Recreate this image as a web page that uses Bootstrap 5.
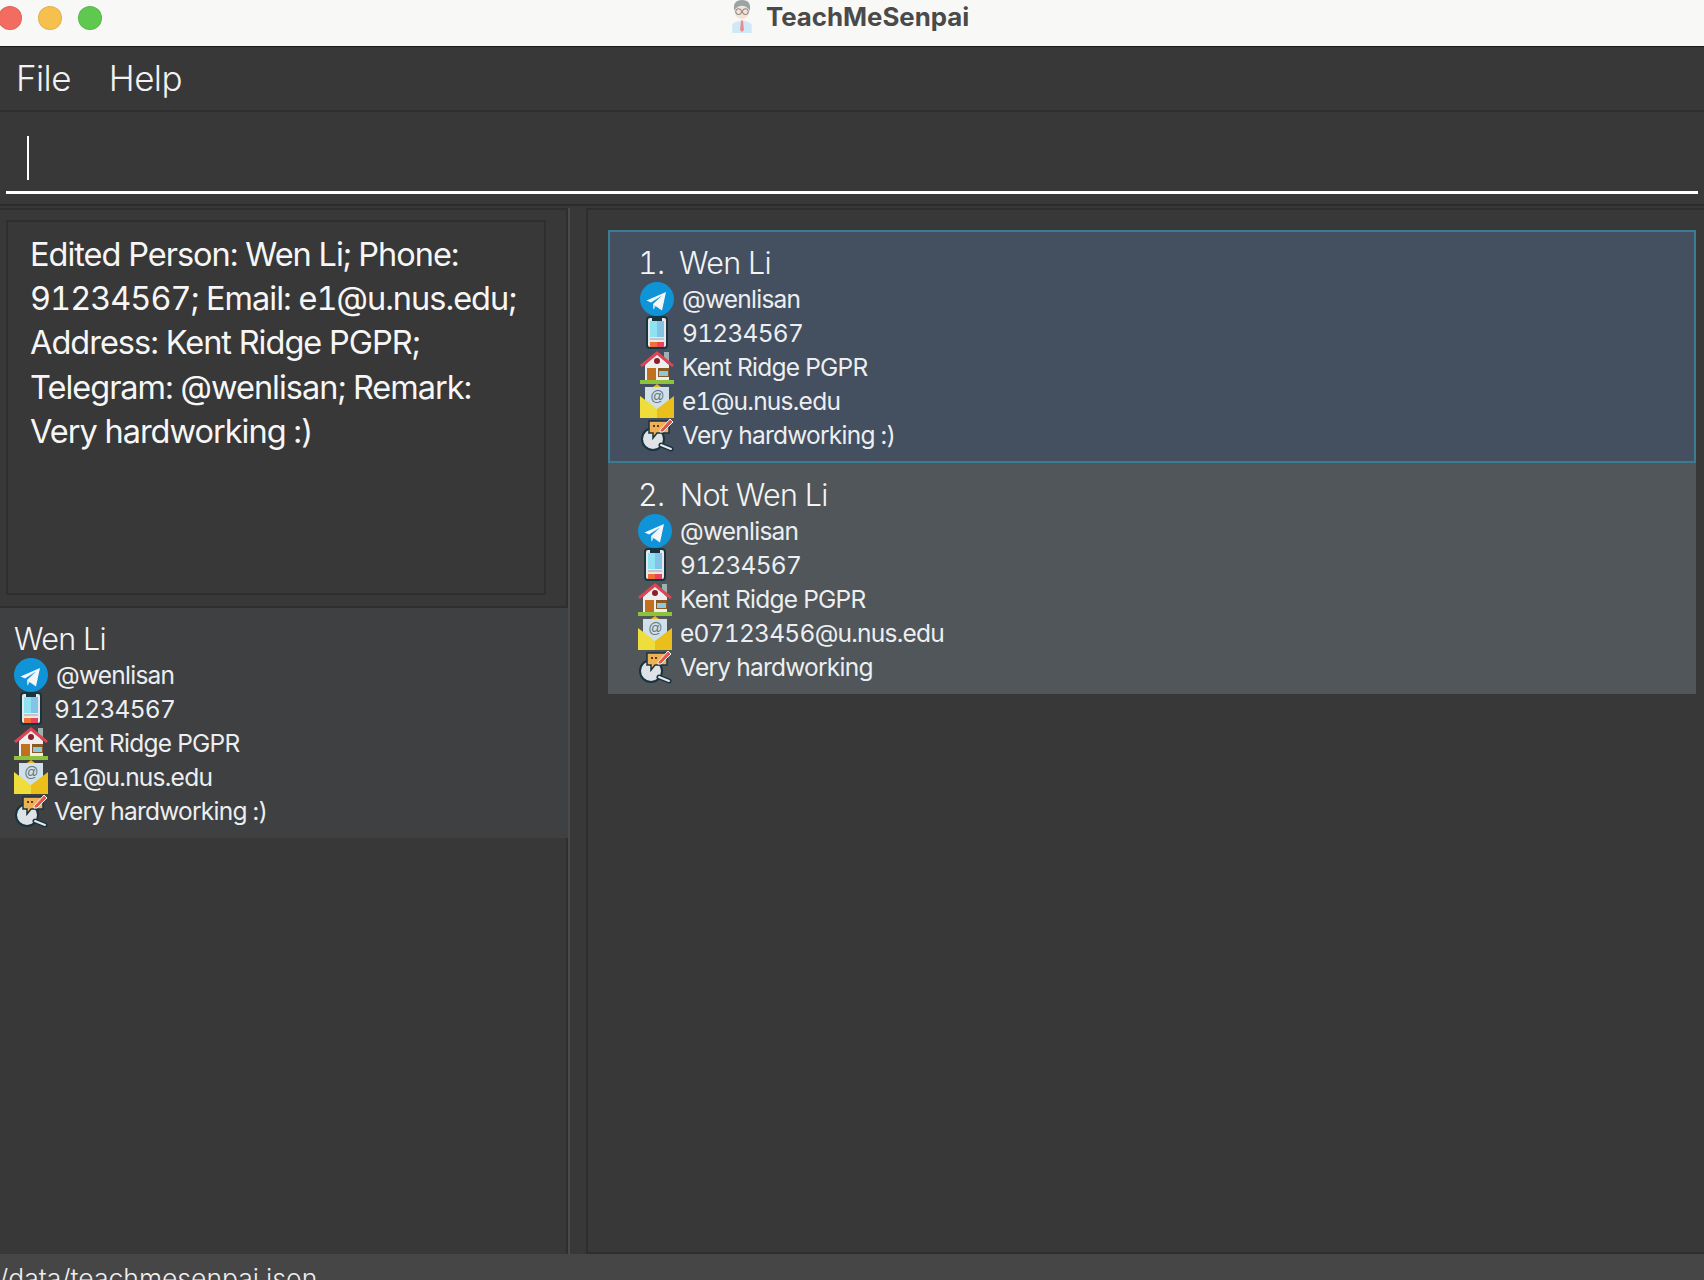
<!doctype html>
<html lang="en">
<head>
<meta charset="utf-8">
<title>TeachMeSenpai</title>
<link href="https://cdn.jsdelivr.net/npm/bootstrap@5.3.0/dist/css/bootstrap.min.css" rel="stylesheet">
<style>
html,body{height:1280px;overflow:hidden;background:#383838}
body{font-family:Inter,"Liberation Sans",sans-serif;color:#f0f0f0;display:flex;flex-direction:column;font-feature-settings:"tnum"}
.tbar{height:47px;flex:none;background:#f8f8f6;border-bottom:1px solid #1c1c1c;position:relative}
.lights{gap:16px;margin-left:-2px;padding-top:6px}
.lt{width:24px;height:24px;border-radius:50%;border:1px solid rgba(0,0,0,.08)}
.tname{position:absolute;left:730px;top:0;height:34px;gap:12px;font-size:25.8px;font-weight:700;color:#4a4a4a;white-space:nowrap;line-height:34px}
.mbar{height:65px;flex:none;border-bottom:2px solid #2e2e2e;padding-left:16px;gap:38px;font-size:35px;font-weight:300;color:#f2f2f2;letter-spacing:-.6px;line-height:62px}
.cmd{height:94px;flex:none;padding:0 6px;border-bottom:2px solid #2c2c2c}
.cmdin{height:82px;border-bottom:3px solid #fff;padding:24px 0 0 21px}
.caret{width:2px;height:44px;background:#fff}
.split{flex:1 1 0;min-height:0;padding-top:2px}
.lpane{width:568px;flex:none;border-top:2px solid #2e2e2e;border-right:2px solid #2e2e2e}
.dvd{width:2px;background:#4a4a4a;flex:none}
.gap{width:16px;flex:none}
.rpane{flex:1 1 0;min-width:0;border:2px solid #2e2e2e;border-right:0;padding:20px 8px 0 20px}
.rwrap{height:398px;padding:10px 20px 11px 6px;border-bottom:2px solid #2e2e2e}
.rbox{height:100%;border:2px solid #2e2e2e;padding:11px 10px 0 22px;font-size:32.5px;font-weight:400;line-height:44.2px;letter-spacing:-1px;color:#f6f6f6}
.ppl{background:#3f4042;padding:12px 0 9px 14px;height:230px;margin-right:-2px}
.pcard{padding:13px 0 0 30px;height:231px}
.pcard.pick{background:#444f60;border:2px solid #3c7c92;padding:12px 0 0 30px;height:233px}
.pick .nm{margin-left:-2px}
.pcard.plain{background:#50565a}
.nm{font-size:30.5px;font-weight:350;line-height:38px;letter-spacing:-.7px;color:#f4f4f4}
.num{display:inline-block;width:41px}
.plain .num{width:42px}
.rw{height:34px;gap:8px;font-size:24.5px;letter-spacing:-.75px;color:#eceef0;line-height:34px}
.ppl .rw{gap:6px}
.ic{width:34px;height:34px;flex:none}
.stat{height:26px;flex:none;background:#464646;font-size:26.5px;font-weight:300;line-height:31px;color:#eee;overflow:hidden;white-space:nowrap;padding-top:9px}
.stat span{display:block;margin-left:-1px}
</style>
</head>
<body>
<svg width="0" height="0" class="position-absolute">
<defs>
<symbol id="i-tg" viewBox="0 0 34 34"><circle cx="17" cy="17" r="17" fill="#0f94d8"/><path d="M6.5 18.5 26 10 22 28.5 15.5 24 13.5 27.5 13 22 22 13.5 11 20.5Z" fill="#f4f6f8"/><path d="M13 22 15.5 24 13.5 27.5Z" fill="#c9d6e2"/></symbol>
<symbol id="i-ph" viewBox="0 0 34 34"><rect x="6" y="0" width="22" height="33" rx="4" fill="#17343f"/><rect x="8" y="2" width="18" height="29" rx="2" fill="#e8e8ea"/><rect x="10" y="5" width="7" height="16" fill="#8fe3f0"/><rect x="17" y="5" width="7" height="16" fill="#83c3e6"/><rect x="12" y="0" width="10" height="5" fill="#17343f"/><rect x="10" y="22" width="14" height="2" fill="#c4c4ca"/><rect x="10" y="26" width="7" height="5" fill="#ef6f37"/><rect x="17" y="26" width="7" height="5" fill="#e9445a"/></symbol>
<symbol id="i-ho" viewBox="0 0 34 34"><rect x="24" y="2" width="5" height="10" fill="#9fb0b5"/><path d="M5 15 17 4 29 15V30H5Z" fill="#eeeeee"/><path d="M0 15 17 1 34 15 32 17 17 5 2 17Z" fill="#de4454"/><circle cx="17" cy="11" r="3" fill="#8c1f2c"/><rect x="7" y="18" width="9" height="13" fill="#c0701f"/><rect x="18" y="18" width="11" height="9" fill="#8a5a25"/><rect x="19" y="21" width="9" height="5" fill="#8dc8de"/><rect x="0" y="30" width="34" height="4" fill="#8dc33c"/></symbol>
<symbol id="i-ma" viewBox="0 0 34 34"><path d="M17 0 21 3H13Z" fill="#eab71e"/><rect x="5" y="3" width="24" height="24" fill="#cfe0e8"/><text x="17" y="17" text-anchor="middle" font-family="Liberation Sans" font-size="14" fill="#66717a">@</text><path d="M0 12 17 25V34H0Z" fill="#eedd3a"/><path d="M34 12 17 25V34H34Z" fill="#eabf1c"/></symbol>
<symbol id="i-re" viewBox="0 0 34 34"><circle cx="13" cy="21" r="11" fill="#dfe3e7" stroke="#17343f" stroke-width="2"/><path d="M21 27 31 31" stroke="#17343f" stroke-width="5" stroke-linecap="round"/><path d="M21 27 31 31" stroke="#e8e8ea" stroke-width="2" stroke-linecap="round"/><path d="M9 3H29V15H17L13 20V15H9Z" fill="#efb154" stroke="#17343f" stroke-width="1.5"/><rect x="13" y="7" width="2" height="2" fill="#5c3c16"/><rect x="17" y="7" width="2" height="2" fill="#5c3c16"/><path d="M20 12 30 1 33 4 23 14H20Z" fill="#e2584e" stroke="#f4f4f4" stroke-width="1"/></symbol>
<symbol id="i-av" viewBox="0 0 24 34"><path d="M2 34V26Q3 22 12 21 21 22 22 26V34Z" fill="#cfe9f6"/><path d="M11 21H13L14 31 12 33 10 31Z" fill="#ec8a8e"/><circle cx="12" cy="12" r="7.5" fill="#f5e2d6"/><path d="M4 11Q2 0 12 0 22 0 20 11 17 6 12 6 7 6 4 11Z" fill="#9aa3a6"/><circle cx="8.5" cy="12" r="3" fill="none" stroke="#777" stroke-width="1"/><circle cx="15.5" cy="12" r="3" fill="none" stroke="#777" stroke-width="1"/></symbol>
</defs>
</svg>
<div class="tbar">
  <div class="lights d-flex">
    <div class="lt" style="background:#f26c60"></div><div class="lt" style="background:#f6c04f"></div><div class="lt" style="background:#5fc94f"></div>
  </div>
  <div class="tname d-flex"><svg width="24" height="33"><use href="#i-av"/></svg><span>TeachMeSenpai</span></div>
</div>
<div class="mbar d-flex"><span>File</span><span>Help</span></div>
<div class="cmd"><div class="cmdin"><div class="caret"></div></div></div>
<div class="split d-flex">
  <div class="lpane">
    <div class="rwrap"><div class="rbox">Edited Person: Wen Li; Phone: 91234567; Email: e1@u.nus.edu; Address: Kent Ridge PGPR; Telegram: @wenlisan; Remark: Very hardworking :)</div></div>
    <div class="ppl">
      <div class="nm">Wen Li</div>
      <div class="rw d-flex"><svg class="ic"><use href="#i-tg"/></svg><span style="margin-left:2px">@wenlisan</span></div>
      <div class="rw d-flex"><svg class="ic"><use href="#i-ph"/></svg><span>91234567</span></div>
      <div class="rw d-flex"><svg class="ic"><use href="#i-ho"/></svg><span>Kent Ridge PGPR</span></div>
      <div class="rw d-flex"><svg class="ic"><use href="#i-ma"/></svg><span>e1@u.nus.edu</span></div>
      <div class="rw d-flex"><svg class="ic"><use href="#i-re"/></svg><span>Very hardworking :)</span></div>
    </div>
  </div>
  <div class="dvd"></div>
  <div class="gap"></div>
  <div class="rpane">
    <div class="pcard pick">
      <div class="nm"><span class="num">1.</span>Wen Li</div>
      <div class="rw d-flex"><svg class="ic"><use href="#i-tg"/></svg><span>@wenlisan</span></div>
      <div class="rw d-flex"><svg class="ic"><use href="#i-ph"/></svg><span>91234567</span></div>
      <div class="rw d-flex"><svg class="ic"><use href="#i-ho"/></svg><span>Kent Ridge PGPR</span></div>
      <div class="rw d-flex"><svg class="ic"><use href="#i-ma"/></svg><span>e1@u.nus.edu</span></div>
      <div class="rw d-flex"><svg class="ic"><use href="#i-re"/></svg><span>Very hardworking :)</span></div>
    </div>
    <div class="pcard plain">
      <div class="nm"><span class="num">2.</span>Not Wen Li</div>
      <div class="rw d-flex"><svg class="ic"><use href="#i-tg"/></svg><span>@wenlisan</span></div>
      <div class="rw d-flex"><svg class="ic"><use href="#i-ph"/></svg><span>91234567</span></div>
      <div class="rw d-flex"><svg class="ic"><use href="#i-ho"/></svg><span>Kent Ridge PGPR</span></div>
      <div class="rw d-flex"><svg class="ic"><use href="#i-ma"/></svg><span>e07123456@u.nus.edu</span></div>
      <div class="rw d-flex"><svg class="ic"><use href="#i-re"/></svg><span>Very hardworking</span></div>
    </div>
  </div>
</div>
<div class="stat"><span>/data/teachmesenpai.json</span></div>
<script src="https://cdn.jsdelivr.net/npm/bootstrap@5.3.0/dist/js/bootstrap.bundle.min.js"></script>
</body>
</html>
